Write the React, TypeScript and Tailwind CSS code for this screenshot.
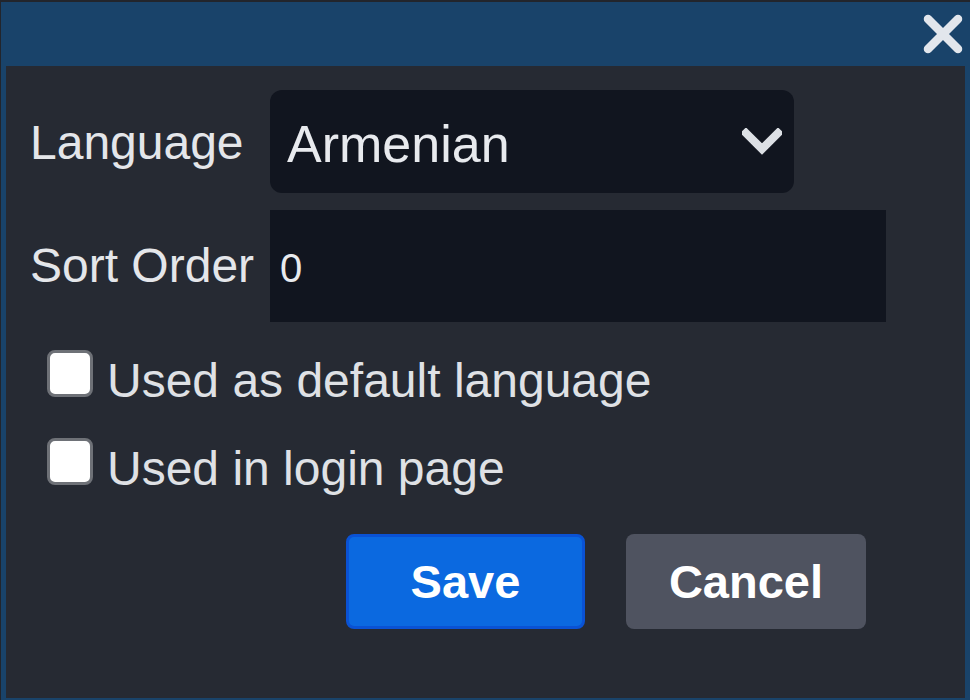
import React from "react";

const font = { fontFamily: '"Liberation Sans", Arial, sans-serif' };

function CloseIcon() {
  return (
    <svg width="40" height="40" viewBox="0 0 40 40" fill="none">
      <path d="M5 5 L35 35 M35 5 L5 35" stroke="#e2e6ec" strokeWidth="8.5" strokeLinecap="round" />
    </svg>
  );
}

function Chevron() {
  return (
    <svg width="40" height="28" viewBox="0 0 40 28" fill="none">
      <path d="M4 5 L20 21 L36 5" stroke="#dde0e5" strokeWidth="8" strokeLinecap="square" strokeLinejoin="miter" />
    </svg>
  );
}

function Check({ label }: { label: string }) {
  return (
    <label className="flex items-center h-[47px]">
      <span className="w-[46px] h-[47px] rounded-[8px] border-[3px] border-[#6e7177] bg-white shrink-0" />
      <span className="ml-[14px] text-[48px] leading-none text-[#dfe1e5] pt-[14px]">{label}</span>
    </label>
  );
}

export default function App() {
  return (
    <div className="w-[970px] h-[700px] overflow-hidden bg-[#22252c] pl-[1px] pt-[2px]" style={font}>
      <div className="w-[969px] h-[698px] bg-[#19436a] flex flex-col px-[5px] pb-[2px]">
        <div className="h-[64px] shrink-0 flex items-center justify-end pr-[2px]">
          <CloseIcon />
        </div>
        <div className="flex-1 bg-[#262a33] pl-[24px] pt-[24px]">
          <div className="grid grid-cols-[240px_auto] gap-y-[17px] items-center">
            <div className="text-[48px] leading-none text-[#e4e6ea] pt-[2px]">Language</div>
            <div className="w-[524px] h-[103px] rounded-[12px] bg-[#11151f] flex items-center justify-between pl-[17px] pr-[12px]">
              <span className="text-[52px] leading-none text-[#e8eaee] pt-[4px]">Armenian</span>
              <Chevron />
            </div>
            <div className="text-[48px] leading-none text-[#e4e6ea]">Sort Order</div>
            <div className="w-[616px] h-[112px] bg-[#11151f] flex items-center pl-[10px]">
              <span className="text-[40px] leading-none text-[#e8eaee] pt-[4px]">0</span>
            </div>
          </div>
          <div className="mt-[28px] ml-[17px] flex flex-col gap-[41px]">
            <Check label="Used as default language" />
            <Check label="Used in login page" />
          </div>
          <div className="mt-[49px] ml-[316px] flex gap-[41px]">
            <button className="w-[239px] h-[95px] rounded-[8px] bg-[#0b69e0] border-[3px] border-[#0a52d4] text-white font-bold text-[47px] leading-none">
              Save
            </button>
            <button className="w-[240px] h-[95px] rounded-[8px] bg-[#4f5360] text-white font-bold text-[47px] leading-none">
              Cancel
            </button>
          </div>
        </div>
      </div>
    </div>
  );
}
